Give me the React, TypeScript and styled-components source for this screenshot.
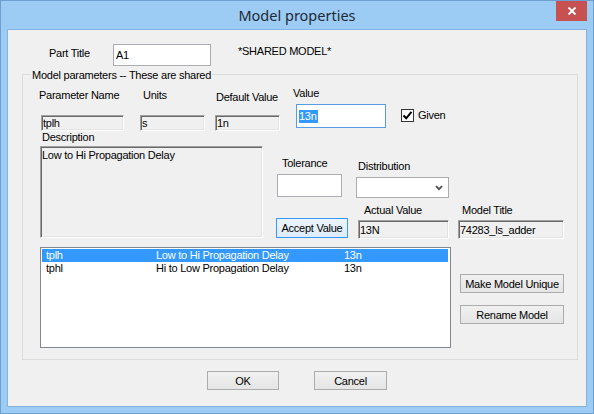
import React from 'react';
import styled, { createGlobalStyle } from 'styled-components';

const GlobalStyle = createGlobalStyle`
  html, body {
    margin: 0;
    padding: 0;
    background: #9ccbf3;
  }
  body {
    font-family: "Liberation Sans", Arial, sans-serif;
    font-size: 11px;
    letter-spacing: -0.25px;
    color: #000;
  }
`;

type Spot = { $ml?: number; $mt?: number };
type Size = { $w: number; $h: number };

const Window = styled.div`
  box-sizing: border-box;
  width: 594px;
  height: 414px;
  border: 1px solid #6d9fd1;
  background: #9ccbf3;
  padding: 0 6px 6px;
  display: flex;
  flex-direction: column;
`;

const TitleBar = styled.div`
  height: 28px;
  flex-shrink: 0;
  display: grid;
  grid-template-columns: 1fr auto 1fr;
  align-items: start;
`;

const Title = styled.div`
  grid-column: 2;
  font-family: "Noto Sans", "Open Sans", sans-serif;
  font-size: 14.5px;
  letter-spacing: 0;
  line-height: 28px;
  color: #1e2a36;
`;

const CloseButton = styled.div`
  grid-column: 3;
  justify-self: end;
  width: 31px;
  height: 20px;
  background: #c75050;
  display: flex;
  align-items: center;
  justify-content: center;
`;

const Client = styled.div`
  flex: 1;
  border: 1px solid #86b3de;
  background: #f0f0f0;
  display: flex;
  flex-direction: column;
`;

const Row = styled.div<Spot>`
  display: flex;
  align-items: flex-start;
  margin-left: ${p => p.$ml ?? 0}px;
  margin-top: ${p => p.$mt ?? 0}px;
`;

const Col = styled.div<Spot>`
  display: flex;
  flex-direction: column;
  align-items: flex-start;
  margin-left: ${p => p.$ml ?? 0}px;
  margin-top: ${p => p.$mt ?? 0}px;
`;

const Caption = styled.span<Spot & { $w?: number }>`
  display: block;
  height: 12px;
  line-height: 12px;
  white-space: nowrap;
  margin-left: ${p => p.$ml ?? 0}px;
  margin-top: ${p => p.$mt ?? 0}px;
  ${p => (p.$w ? `width: ${p.$w}px;` : '')}
`;

const Edit = styled.div<Spot & Size & { $focus?: boolean }>`
  box-sizing: border-box;
  width: ${p => p.$w}px;
  height: ${p => p.$h}px;
  margin-left: ${p => p.$ml ?? 0}px;
  margin-top: ${p => p.$mt ?? 0}px;
  border: 1px solid ${p => (p.$focus ? '#569de5' : '#abadb3')};
  background: #fff;
  padding: 0 2px;
  display: flex;
  align-items: center;
  white-space: nowrap;
`;

const Selection = styled.span`
  background: #3399ff;
  color: #fff;
  line-height: 13px;
  padding: 0 1px 0 0;
`;

const Sunken = styled.div<Spot & Size & { $top?: boolean }>`
  box-sizing: border-box;
  width: ${p => p.$w}px;
  height: ${p => p.$h}px;
  margin-left: ${p => p.$ml ?? 0}px;
  margin-top: ${p => p.$mt ?? 0}px;
  border-style: solid;
  border-width: 1px;
  border-color: #a0a0a0 #ffffff #ffffff #a0a0a0;
  box-shadow: inset 1px 1px 0 #696969, inset -1px -1px 0 #e3e3e3;
  background: #f0f0f0;
  padding: ${p => (p.$top ? '2px 1px' : '0 1px')};
  display: flex;
  align-items: ${p => (p.$top ? 'flex-start' : 'center')};
  line-height: 12px;
  white-space: nowrap;
`;

const Combo = styled(Edit)`
  border-color: #acacac;
  justify-content: flex-end;
  padding-right: 5px;
`;

const Button = styled.div<Spot & Size & { $default?: boolean }>`
  box-sizing: border-box;
  width: ${p => p.$w}px;
  height: ${p => p.$h}px;
  margin-left: ${p => p.$ml ?? 0}px;
  margin-top: ${p => p.$mt ?? 0}px;
  border: 1px solid ${p => (p.$default ? '#3399ff' : '#acacac')};
  background: ${p =>
    p.$default ? 'linear-gradient(#ecf4fc, #dcecfc)' : 'linear-gradient(#f0f0f0, #e5e5e5)'};
  display: flex;
  align-items: center;
  justify-content: center;
  white-space: nowrap;
`;

const CheckBox = styled.div`
  box-sizing: border-box;
  width: 13px;
  height: 13px;
  border: 1px solid #333;
  background: #fff;
  display: flex;
  align-items: center;
  justify-content: center;
`;

const GroupBox = styled.div`
  position: relative;
  box-sizing: border-box;
  width: 556px;
  height: 286px;
  margin: 8px 0 0 14px;
  border: 1px solid #dcdcdc;
`;

const Legend = styled.span`
  position: absolute;
  top: -6px;
  left: 8px;
  padding: 0 1px;
  line-height: 12px;
  background: #f0f0f0;
  white-space: nowrap;
`;

const ListBox = styled.div<Spot>`
  box-sizing: border-box;
  width: 411px;
  height: 101px;
  margin-left: ${p => p.$ml ?? 0}px;
  margin-top: ${p => p.$mt ?? 0}px;
  border: 1px solid #828790;
  background: #fff;
  padding: 1px 2px 1px 1px;
`;

const ListRow = styled.div<{ $selected?: boolean }>`
  display: grid;
  grid-template-columns: 110px 188px 1fr;
  height: 13px;
  line-height: 13px;
  padding-left: 4px;
  background: ${p => (p.$selected ? '#3399ff' : 'transparent')};
  color: ${p => (p.$selected ? '#fff' : '#000')};
  white-space: nowrap;
`;

const rows = [
  { name: 'tplh', desc: 'Low to Hi Propagation Delay', value: '13n' },
  { name: 'tphl', desc: 'Hi to Low Propagation Delay', value: '13n' },
];

export default function App() {
  return (
    <>
      <GlobalStyle />
      <Window>
        <TitleBar>
          <Title>Model properties</Title>
          <CloseButton>
            <svg width="10" height="10" viewBox="0 0 10 10">
              <path d="M1.5 1.5 L8.5 8.5 M8.5 1.5 L1.5 8.5" stroke="#fff" strokeWidth="1.8" />
            </svg>
          </CloseButton>
        </TitleBar>

        <Client>
          <Row>
            <Caption $ml={41} $mt={17} $w={64}>Part Title</Caption>
            <Edit $w={98} $h={22} $mt={14}>A1</Edit>
            <Caption $ml={27} $mt={15}>*SHARED MODEL*</Caption>
          </Row>

          <GroupBox>
            <Legend>Model parameters -- These are shared</Legend>

            <Row>
              <Col $ml={16}>
                <Caption $mt={14}>Parameter Name</Caption>
                <Sunken $w={83} $h={16} $ml={2} $mt={14}>tplh</Sunken>
              </Col>
              <Col $ml={16}>
                <Caption $ml={3} $mt={14}>Units</Caption>
                <Sunken $w={65} $h={16} $mt={14}>s</Sunken>
              </Col>
              <Col $ml={10}>
                <Caption $ml={1} $mt={16}>Default Value</Caption>
                <Sunken $w={65} $h={16} $mt={12}>1n</Sunken>
              </Col>
              <Col $ml={13}>
                <Caption $mt={12}>Value</Caption>
                <Edit $w={90} $h={24} $ml={3} $mt={5} $focus>
                  <Selection>13n</Selection>
                </Edit>
              </Col>
              <Row $ml={15} $mt={34}>
                <CheckBox>
                  <svg width="11" height="11" viewBox="0 0 11 11">
                    <path d="M1.5 5.5 L4.2 8.3 L9.5 1.8" stroke="#000" strokeWidth="2" fill="none" />
                  </svg>
                </CheckBox>
                <Caption $ml={4}>Given</Caption>
              </Row>
            </Row>

            <Row>
              <Col $ml={17}>
                <Caption $ml={2}>Description</Caption>
                <Sunken $w={223} $h={92} $mt={3} $top>Low to Hi Propagation Delay</Sunken>
              </Col>
              <Col $ml={13}>
                <Row>
                  <Col $ml={1}>
                    <Caption $ml={5} $mt={26}>Tolerance</Caption>
                    <Edit $w={65} $h={23} $mt={5} />
                  </Col>
                  <Col $ml={14}>
                    <Caption $ml={2} $mt={29}>Distribution</Caption>
                    <Combo $w={93} $h={21} $mt={5}>
                      <svg width="8" height="6" viewBox="0 0 8 6">
                        <path d="M1 1.2 L4 4.2 L7 1.2" stroke="#505050" strokeWidth="1.8" fill="none" />
                      </svg>
                    </Combo>
                  </Col>
                </Row>
                <Row>
                  <Button $w={72} $h={20} $mt={20} $default>Accept Value</Button>
                  <Col $ml={10}>
                    <Caption $ml={6} $mt={6}>Actual Value</Caption>
                    <Sunken $w={91} $h={19} $mt={4}>13N</Sunken>
                  </Col>
                  <Col $ml={9}>
                    <Caption $ml={4} $mt={6}>Model Title</Caption>
                    <Sunken $w={106} $h={19} $mt={4}>74283_ls_adder</Sunken>
                  </Col>
                </Row>
              </Col>
            </Row>

            <Row>
              <ListBox $ml={17} $mt={8}>
                {rows.map((r, i) => (
                  <ListRow key={r.name} $selected={i === 0}>
                    <span>{r.name}</span>
                    <span>{r.desc}</span>
                    <span>{r.value}</span>
                  </ListRow>
                ))}
              </ListBox>
              <Col $ml={9}>
                <Button $w={104} $h={19} $mt={35}>Make Model Unique</Button>
                <Button $w={104} $h={19} $mt={12}>Rename Model</Button>
              </Col>
            </Row>
          </GroupBox>

          <Row $mt={11}>
            <Button $w={72} $h={19} $ml={199}>OK</Button>
            <Button $w={73} $h={19} $ml={35}>Cancel</Button>
          </Row>
        </Client>
      </Window>
    </>
  );
}
